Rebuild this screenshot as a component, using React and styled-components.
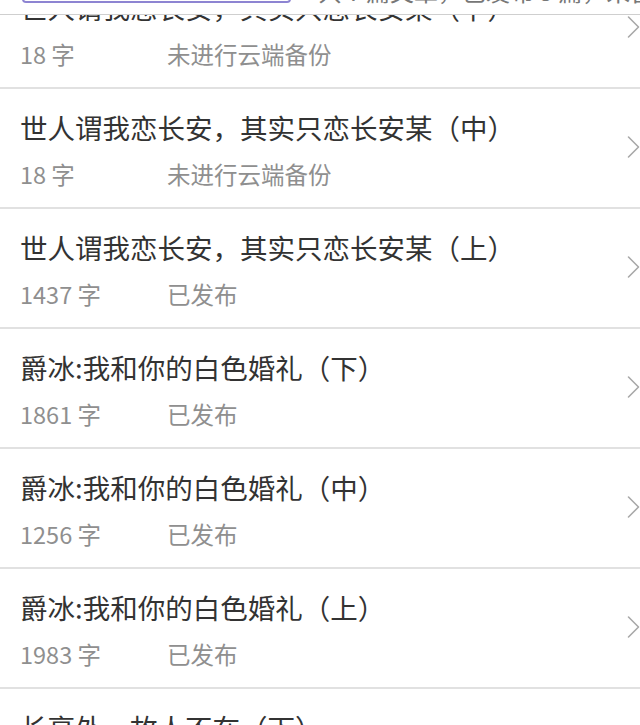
import React from 'react';
import styled, { createGlobalStyle } from 'styled-components';

const ARTICLES = [
  ['世人谓我恋长安，其实只恋长安某（下）', '18 字', '未进行云端备份'],
  ['世人谓我恋长安，其实只恋长安某（中）', '18 字', '未进行云端备份'],
  ['世人谓我恋长安，其实只恋长安某（上）', '1437 字', '已发布'],
  ['爵冰:我和你的白色婚礼（下）', '1861 字', '已发布'],
  ['爵冰:我和你的白色婚礼（中）', '1256 字', '已发布'],
  ['爵冰:我和你的白色婚礼（上）', '1983 字', '已发布'],
  ['长亭外，故人不在（下）', '1102 字', '已发布'],
];

const GlobalStyle = createGlobalStyle`
  html, body {
    margin: 0;
    padding: 0;
    background: #fff;
  }
  body {
    font-family: "Noto Sans CJK SC", "Noto Sans", sans-serif;
  }
`;

const Chevron = () => (
  <svg width="13" height="24" viewBox="0 0 13 24" fill="none">
    <polyline
      points="1.5,2 11.5,12 1.5,22"
      stroke="#a9a9a9"
      strokeWidth="1.6"
      strokeLinecap="round"
      strokeLinejoin="round"
    />
  </svg>
);

const App = () => {
  return (
    <Page>
      <GlobalStyle />
      <Header>
        <SearchBox />
        <Summary>共 7 篇文章，已发布 5 篇，未备份 2 篇</Summary>
      </Header>
      <Viewport>
        <List>
          {ARTICLES.map((item, index) => (
            <Row key={index}>
              <Info>
                <Title>{item[0]}</Title>
                <Meta>
                  <Count>{item[1]}</Count>
                  <Status>{item[2]}</Status>
                </Meta>
              </Info>
              <Arrow>
                <Chevron />
              </Arrow>
            </Row>
          ))}
        </List>
      </Viewport>
    </Page>
  );
};

const Page = styled.div`
  width: 640px;
  height: 725px;
  overflow: hidden;
  display: flex;
  flex-direction: column;
  background: #fff;
`;

const Header = styled.div`
  flex: none;
  height: 15px;
  box-sizing: border-box;
  display: flex;
  align-items: flex-end;
  overflow: hidden;
  padding-bottom: 11px;
  border-bottom: 1px solid #cfcfcf;
  background: #fff;
`;

const SearchBox = styled.div`
  flex: none;
  width: 269px;
  height: 40px;
  margin-left: 22px;
  box-sizing: border-box;
  border: 2px solid #8d84d2;
  border-radius: 4px;
`;

const Summary = styled.div`
  margin-left: 27px;
  margin-bottom: -3px;
  font-size: 24px;
  line-height: 30px;
  color: #777;
  white-space: nowrap;
`;

const Viewport = styled.div`
  flex: 1;
  overflow: hidden;
`;

const List = styled.div`
  margin-top: -46px;
`;

const Row = styled.div`
  height: 120px;
  box-sizing: border-box;
  display: flex;
  align-items: center;
  border-bottom: 2px solid #e1e1e1;
  padding-left: 20px;
`;

const Info = styled.div`
  flex: 1;
  min-width: 0;
  display: flex;
  flex-direction: column;
  gap: 12px;
  margin-top: 3px;
`;

const Title = styled.div`
  font-size: 27.5px;
  line-height: 36px;
  color: #333;
  white-space: nowrap;
`;

const Meta = styled.div`
  display: flex;
  font-size: 23.5px;
  line-height: 34px;
  color: #8f8f8f;
`;

const Count = styled.span`
  width: 147px;
  flex: none;
`;

const Status = styled.span`
  white-space: nowrap;
`;

const Arrow = styled.div`
  flex: none;
  display: flex;
  margin-right: 0;
  margin-top: -2px;
`;

export default App;
